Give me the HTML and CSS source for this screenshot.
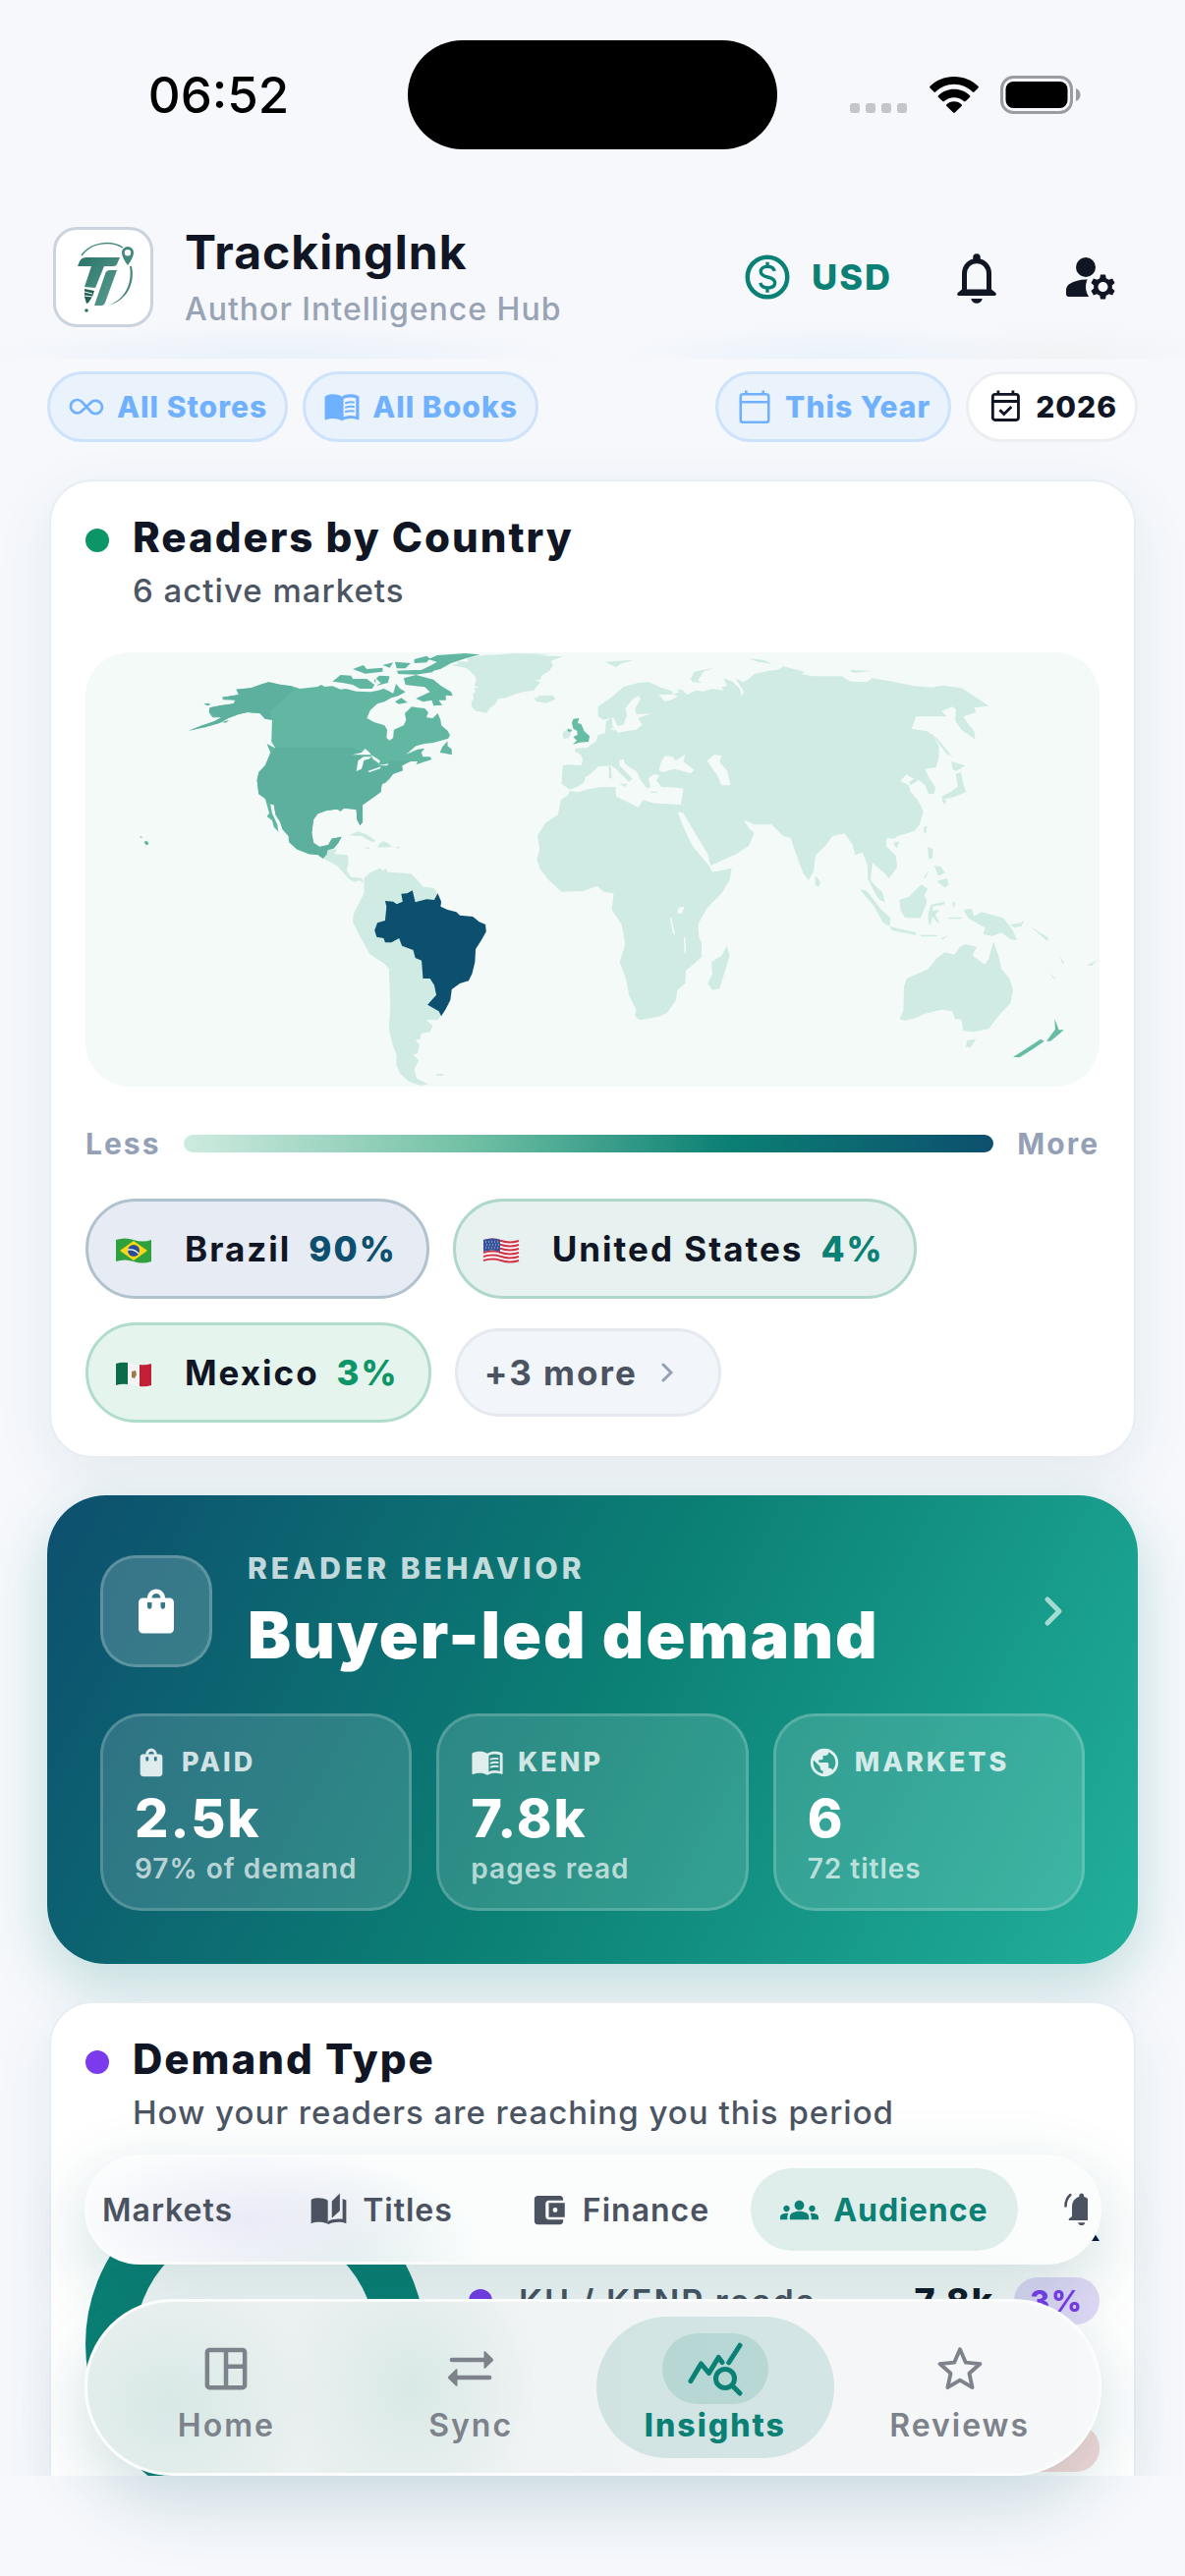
FILE: index.html
```html
<!DOCTYPE html>
<html lang="en">
<head>
<meta charset="utf-8">
<meta name="viewport" content="width=device-width, initial-scale=1">
<title>TrackingInk</title>
<link rel="stylesheet" href="styles.css">
</head>
<body>
<svg class="sprite" aria-hidden="true">
  <symbol id="i-bag" viewBox="0 0 24 24"><path fill="currentColor" d="M18 6h-2c0-2.21-1.79-4-4-4S8 3.79 8 6H6c-1.1 0-2 .9-2 2v12c0 1.1.9 2 2 2h12c1.100 0 2-.9 2-2V8c0-1.100-.9-2-2-2zm-8 4c0 .55-.45 1-1 1s-1-.45-1-1V8h2v2zm2-6c1.100 0 2 .9 2 2h-4c0-1.100.9-2 2-2zm4 6c0 .55-.45 1-1 1s-1-.45-1-1V8h2v2z"/></symbol>
  <symbol id="i-book" viewBox="0 0 24 24"><path fill="currentColor" fill-rule="evenodd" d="M1 5.500C2.500 4.300 4.500 4 6.500 4c2 0 4 .4 5.500 1.500C13.500 4.400 15.500 4 17.500 4c2 0 4 .3 5.500 1.500V20c0 .4-.4.6-.8.4-1.400-.7-3-.9-4.700-.9-1.900 0-3.900.4-5.500 1.500-1.600-1.100-3.600-1.500-5.500-1.500-1.700 0-3.300.2-4.700.9-.4.2-.8 0-.8-.4zM13 7v11.700c1.300-.7 3-1 4.500-1 1.200 0 2.400.1 3.500.5V6.500c-1.100-.4-2.300-.5-3.500-.5-1.500 0-3.200.3-4.500 1z"/><path fill="none" stroke="currentColor" stroke-width="1.300" stroke-linecap="round" d="M14.500 9.600c1.600-.6 3.300-.7 5-.4M14.500 12.400c1.600-.6 3.300-.7 5-.4M14.500 15.200c1.600-.6 3.300-.7 5-.4"/></symbol>
</svg>

<div class="app">
  <div class="status">
    <span class="status-time">06:52</span>
    <span class="island"></span>
    <span class="status-icons">
      <svg class="ic-dots" viewBox="0 0 58 10"><g fill="#c5c6c9"><rect width="10" height="10" rx="3"/><rect x="16" width="10" height="10" rx="3"/><rect x="32" width="10" height="10" rx="3"/><rect x="48" width="10" height="10" rx="3"/></g></svg>
      <svg class="ic-wifi" viewBox="0 0 50 38"><path d="M25 0C35 0 43.500 3.800 49.500 9.800c.5.5.5 1.200 0 1.700l-4 4c-.5.5-1.200.5-1.700 0C38.800 10.600 32.300 7.700 25 7.700S11.200 10.600 6.200 15.500c-.5.5-1.200.5-1.700 0l-4-4c-.5-.5-.5-1.200 0-1.700C6.500 3.800 15 0 25 0zM25 12.800c6.200 0 11.800 2.400 16 6.400.5.5.5 1.200 0 1.700l-4.300 4.200c-.5.5-1.200.5-1.700 0-2.700-2.400-6.100-3.900-10-3.900s-7.300 1.500-10 3.900c-.5.5-1.200.5-1.700 0L9 20.900c-.5-.5-.5-1.200 0-1.700 4.200-4 9.800-6.400 16-6.400zM25 25.300c3 0 5.600 1.100 7.600 2.900.5.5.5 1.200 0 1.700l-6.700 6.700c-.5.5-1.300.5-1.800 0l-6.700-6.700c-.5-.5-.5-1.200 0-1.700 2-1.800 4.600-2.900 7.600-2.900z"/></svg>
      <svg class="ic-batt" viewBox="0 0 82 39"><rect x="1.500" y="1.500" width="71" height="36" rx="12" fill="none" stroke="#9b9ca1" stroke-width="3"/><rect x="5.500" y="6" width="63" height="27" rx="8"/><path d="M77 13c3 1 4.500 3.600 4.500 6.500S80 25 77 26z" fill="#9b9ca1"/></svg>
    </span>
  </div>

  <header class="appbar">
    <span class="logo">
      <svg viewBox="0 0 96 96" role="img" aria-label="TrackingInk logo">
        <defs><linearGradient id="lg" x1="0" y1="0" x2="1" y2="1"><stop offset="0" stop-color="#2c7468"/><stop offset="1" stop-color="#5a9e93"/></linearGradient></defs>
        <path d="M26 26C35 13 55 10 68 18" fill="none" stroke="#44897d" stroke-width="1.400"/>
        <path d="M77 37c4 18-6 36-24 40 17-6 25-22 22-40z" fill="#44897d"/>
        <path fill="url(#lg)" d="M31 28h34l-3 7q-1 2-3 2H49l-9 22-11-1 7-21H22l2-5q2-4 7-4zM55 41h7L50 74q-1 3-4 3h-7l11-32q1-4 5-4z"/>
        <path fill="#235f55" d="M29 60l10 2-2 6-4 6-2 1-2-7z"/><path d="M29 63l8 2M29 67l8 1" stroke="#fff"/><circle cx="31" cy="82" r="1.800" fill="#2c7468"/>
        <path fill="#44897d" fill-rule="evenodd" d="M73 17a6 6 0 0 1 6 6c0 4-3 9-6 13-3-4-6-9-6-13a6 6 0 0 1 6-6zm0 3a3.200 3.200 0 1 0 0 6.400 3.200 3.200 0 0 0 0-6.400z"/>
      </svg>
    </span>
    <div class="brand">
      <h1>TrackingInk</h1>
      <p>Author Intelligence Hub</p>
    </div>
    <button class="currency" type="button">
      <svg viewBox="0 0 24 24" fill="none" stroke="currentColor"><circle cx="12" cy="12" r="9" stroke-width="2"/><path stroke-width="1.500" d="M15.200 9.300c-.3-1.300-1.400-2.100-3.100-2.100-1.800 0-3.100.9-3.100 2.300 0 1.500 1.200 2 3.100 2.500 2.100.5 3.300 1.100 3.300 2.600s-1.300 2.300-3.200 2.300c-1.800 0-3.100-.8-3.400-2.300M12 5.200v2M12 17v2"/></svg>
      USD
    </button>
    <button class="icon-btn" type="button" aria-label="Notifications">
      <svg viewBox="0 0 24 24"><path fill="none" stroke="currentColor" stroke-width="2" d="M7 18.500v-7.800c0-3 2-5.200 5-5.200s5 2.200 5 5.200v7.800"/><path fill="currentColor" d="M10.500 5.500V4a1.500 1.500 0 0 1 3 0v1.500zM6 17h12l1.700 1.400c.5.500.2 1.200-.5 1.200H4.800c-.7 0-1-.7-.5-1.200zM9.700 20.800h4.600c-.2 1.200-1.200 1.900-2.300 1.900s-2.100-.7-2.300-1.900z"/></svg>
    </button>
    <button class="icon-btn" type="button" aria-label="Account settings">
      <svg viewBox="0 0 24 24" fill="currentColor"><circle cx="10" cy="8" r="4"/><path d="M10.670 13.020C10.450 13.010 10.230 13 10 13c-2.420 0-4.680.67-6.610 1.820C2.510 15.340 2 16.320 2 17.350V19c0 .6.400 1 1 1h8.260c-.79-1.130-1.260-2.510-1.260-4 0-1.070.25-2.070.67-2.980z"/><path fill-rule="evenodd" d="M20.750 16c0-.22-.03-.42-.06-.63l1.140-1.010-1-1.730-1.450.49c-.32-.27-.68-.48-1.080-.63L18 11h-2l-.3 1.490c-.4.15-.76.36-1.080.63l-1.450-.49-1 1.730 1.140 1.010c-.03.21-.06.41-.06.63s.03.42.06.63l-1.140 1.010 1 1.730 1.450-.49c.32.27.68.48 1.080.63L16 21h2l.3-1.490c.4-.15.76-.36 1.080-.63l1.450.49 1-1.730-1.140-1.010c.03-.21.06-.41.06-.63zM17 18c-1.100 0-2-.9-2-2s.9-2 2-2 2 .9 2 2-.9 2-2 2z"/></svg>
    </button>
  </header>

  <div class="viewport">
    <main class="scroll">
      <div class="filters">
        <button class="chip" type="button"><svg viewBox="0 0 24 24"><path fill="none" stroke="currentColor" stroke-width="1.700" stroke-linecap="round" d="M11 13l-2.500 2.200A4.200 4.200 0 1 1 9.300 9.100L14.700 15A4.200 4.200 0 1 0 15.500 8.800L13 11"/></svg>All Stores</button>
        <button class="chip" type="button"><svg><use href="#i-book"/></svg>All Books</button>
        <span class="spacer"></span>
        <button class="chip" type="button"><svg viewBox="0 0 24 24" fill="none" stroke="currentColor" stroke-width="1.600"><rect x="3" y="4" width="18" height="18" rx="1.500"/><path d="M3 9h18M6.500 1.500V4M17.500 1.500V4"/></svg>This Year</button>
        <button class="chip chip-plain" type="button"><svg viewBox="0 0 24 24" fill="none" stroke="currentColor" stroke-width="1.800"><rect x="4" y="4" width="16.500" height="16.500" rx="1.500"/><path d="M4 8.500h16.500M7.500 1.500V4M17 1.500V4M8.500 14l2.700 2.700L16 12"/></svg>2026</button>
      </div>

      <section class="card">
        <div class="card-head">
          <span class="dot dot-green"></span>
          <div><h2>Readers by Country</h2><p>6 active markets</p></div>
        </div>
        <svg class="map" viewBox="0 0 1032 442" role="img" aria-label="World map of readers">
          <rect width="1032" height="442" fill="#f3faf8"/>
          <g transform="translate(-6.500 -13) scale(.35714 .33333)">
            <g fill="#cfebe3">
              <path d="M1060 78L1080 74 1075 66 1110 68 1105 58 1150 48 1200 46 1240 42 1340 44 1310 48 1378 52 1345 65 1350 80 1340 95 1318 110 1315 122 1298 124 1315 130 1295 155 1265 160 1240 168 1215 178 1195 180 1185 198 1172 208 1160 224 1130 218 1118 205 1118 190 1125 180 1122 165 1130 160 1125 148 1139 146 1126 140 1132 125 1128 110 1105 88zM1295 175L1305 180 1308 172 1325 172 1350 170 1358 182 1330 194 1302 188zM695 668L706 655 708 642 735 640 728 655 765 658 768 680 762 705 775 725 805 728 812 745 800 735 785 740 770 732 755 715 735 690zM768 598L795 586 820 595 845 615 835 618 805 600zM858 622L868 616 880 622 892 633 850 635zM815 635l12-1 0 4-12 0zM904 633h10v4h-10z"/>
              <path d="M812 728L830 712 860 697 862 706 875 700 880 710 905 712 945 715 965 735 980 755 1010 758 1022 775 1000 900 1040 1080 1030 1150 1022 1162 988 1160 1008 1180 1000 1198 975 1202 972 1220 958 1222 970 1238 965 1262 952 1268 968 1285 955 1312 962 1340 995 1358 975 1362 940 1350 915 1325 903 1295 905 1270 893 1235 883 1190 887 1120 883 1005 870 990 828 960 800 905 780 862 782 838 800 800 812 775zM1018 1326h20v5h-20z"/>
            </g>
            <path fill="#62b7a2" d="M370 222L378 215 372 208 405 200 440 196 445 185 410 184 408 176 440 172 455 168 448 152 490 148 520 136 540 130 575 138 605 142 630 150 660 146 680 144 690 138 700 144 722 142 745 152 760 150 790 158 830 160 850 156 868 150 885 158 895 165 903 135 915 150 930 160 910 172 890 178 870 190 850 196 830 215 820 240 840 252 870 262 878 275 876 300 885 308 895 300 897 275 925 262 932 245 928 225 948 205 965 208 985 210 995 222 990 238 1008 240 1022 225 1030 245 1032 262 1050 278 1057 292 1052 302 1010 315 985 318 960 325 932 350 965 335 985 332 975 345 980 358 1000 358 1005 366 960 382 965 372 945 372 920 385 922 400 895 410 885 425 870 440 868 430 862 445 860 465 835 485 808 505 803 530 808 558 800 567 792 550 790 520 780 515 755 515 745 525 735 518 705 522 680 532 668 550 663 590 668 620 685 633 710 627 720 608 748 602 738 622 725 638 708 642 706 655 695 668 680 657 655 655 620 640 598 618 597 600 580 580 572 555 560 535 555 505 545 502 550 530 565 565 568 587 555 572 550 552 535 540 542 530 530 485 512 472 507 430 512 405 530 385 545 345 535 318 560 332 548 312 550 245 530 242 515 225 480 222 455 228 425 240 400 255 360 268 312 278 350 262 385 250 405 238 380 238zM1028 345L1035 328 1050 310 1050 325 1062 335 1062 352 1045 348zM722 128L745 108 775 110 780 120 820 120 842 138 835 150 800 150 780 138 750 132zM780 90l30-12 10 12 45-4 0 12-50 6zM840 125l15-15 30 2-5 20-30 8zM865 78l30-8-10 16zM900 68l45 4-15 16-25 0zM905 95l95-4 10 8-50 8-50-2zM955 60l35-10 10 8-10 12-35 2zM925 118L960 108 1010 122 1030 140 1060 160 1065 172 1045 170 1045 185 1025 185 1035 200 1010 202 1005 185 980 190 960 180 1000 160 985 145 960 142 930 138zM970 95L1000 80 1020 68 995 60 1020 48 1100 42 1142 46 1100 58 1060 72 1030 90 1000 98zM900 190l18-12 18 14-25 5zM355 196l15-2 5 5-10 3zM405 252l22-6-8 8z"/>
            <path fill="#5db09d" d="M575 138L605 142 610 155 545 220 550 245 530 242 515 225 480 222 455 228 425 240 400 255 312 278 385 250 405 238 370 222 372 208 440 196 445 185 408 176 455 168 448 152 490 148 540 130zM560 330H780L800 340 860 390 890 370 945 370 920 385 922 400 895 410 862 445 860 465 808 505 808 558 800 567 792 550 790 520 755 515 705 522 680 532 668 550 663 590 668 620 685 633 710 627 720 608 748 602 738 622 725 638 708 642 706 655 695 668 680 657 655 655 620 640 598 618 597 600 580 580 572 555 560 535 555 505 545 502 530 485 512 472 507 430 512 405 530 385 550 345zM185 618l8-4 6 10-8 4zM172 600l8 3-2 3z"/>
            <path fill="#f3faf8" d="M778 352L805 345 815 333 828 345 832 352 800 352zM790 402L795 370 810 358 835 357 825 365 812 368 805 395zM832 352L858 370 855 378 838 365zM822 402L860 388 858 394 828 405zM852 384L882 379 878 385zM525 285h10l-4 14-6-2zM845 118l15 15-15 8z"/>
            <path fill="#0d4f6e" d="M872 798L895 800 905 808 922 800 918 776 935 775 950 766 958 802 990 793 1012 795 1022 775 1032 800 1030 815 1050 825 1075 832 1085 842 1122 846 1140 862 1158 870 1160 892 1145 920 1130 945 1128 985 1120 1020 1110 1042 1085 1050 1062 1068 1058 1100 1045 1128 1032 1150 1025 1135 993 1115 1018 1085 1012 1055 1000 1035 980 1035 976 980 958 972 952 948 920 935 912 912 890 925 872 925 868 912 848 908 842 888 850 865 872 858 876 815z"/>
          </g>
          <g transform="translate(473.500 -13) scale(.3699 .33333)">
            <g fill="#cfebe3">
              <path d="M33 385L45 382 85 384 88 365 82 350 66 342 68 332 100 330 125 310 130 292 150 285 152 250 168 238 170 262 178 275 185 285 205 280 235 275 252 260 240 240 262 232 278 226 235 228 232 210 248 180 240 172 225 182 205 210 210 230 200 260 184 264 172 238 145 245 130 235 130 205 165 178 200 145 240 132 270 130 300 145 335 158 335 168 297 168 315 190 340 180 350 172 335 168 355 160 345 155 360 152 375 168 400 155 420 158 445 150 475 155 470 145 485 142 475 118 500 128 520 150 525 172 532 160 515 130 508 118 530 130 545 120 560 105 600 95 625 92 640 82 698 98 690 105 720 112 800 112 825 128 870 130 885 118 940 128 1000 142 1050 146 1075 140 1130 148 1175 180 1205 203 1165 208 1170 222 1135 235 1150 260 1165 280 1168 305 1130 275 1113 248 1115 212 1105 205 1075 218 1090 235 1060 235 1005 235 993 272 1035 280 1050 290 1068 325 1068 360 1060 390 1030 395 1040 420 1058 450 1055 470 1040 472 1030 445 1012 428 990 445 985 435 1000 425 978 412 962 432 985 445 990 465 1010 490 1025 525 1015 565 1000 585 955 600 945 608 925 605 922 630 950 660 953 695 930 730 920 715 885 682 880 735 900 760 912 770 920 802 905 795 890 770 872 730 872 690 858 650 838 658 830 625 808 592 775 600 755 630 728 660 724 705 710 735 695 715 675 655 660 605 640 600 608 565 560 565 535 552 520 575 497 575 480 545 465 515 478 520 500 545 530 550 545 575 560 590 545 630 510 655 440 690 432 655 402 600 365 530 340 520 358 505 365 455 345 452 305 450 290 430 300 415 285 410 268 425 275 450 265 455 245 425 238 405 205 380 200 365 188 368 190 385 225 425 215 435 180 395 165 385 130 388 110 410 95 420 92 435 72 450 52 458 30 440z"/>
              <path d="M52 462L75 466 110 455 145 450 178 450 180 480 210 495 240 512 255 490 285 500 320 502 362 505 350 530 372 590 390 630 435 690 445 710 498 698 492 735 470 775 430 820 405 870 408 910 415 925 415 970 372 1010 370 1050 348 1070 345 1100 320 1140 295 1152 245 1162 232 1150 235 1130 215 1085 208 1040 190 985 205 930 195 870 168 825 173 775 145 770 128 752 90 768 30 770 -5 735 -30 700 -38 670 -30 640 -37 600 -15 560 20 535 28 490 48 475zM485 935L492 965 465 1065 445 1070 432 1050 445 1020 442 985 470 965zM728 720L742 740 738 755 728 750zM850 762L870 768 910 825 935 850 932 875 915 865 890 815zM932 875L965 885 1005 895 1003 902 940 888zM960 795L985 785 1020 748 1037 762 1028 780 1035 800 1018 850 975 850 962 825zM1045 810L1085 800 1082 810 1052 815 1050 828 1070 825 1058 840 1070 865 1062 862 1050 845 1045 872 1040 868 1038 840zM1135 825L1158 822 1165 845 1185 832 1245 850 1270 885 1283 918 1265 915 1240 895 1215 905 1190 900 1195 880 1150 852z"/>
              <path d="M972 1060L980 1035 1040 1005 1060 975 1085 955 1110 962 1125 940 1140 930 1172 938 1160 965 1195 992 1205 975 1218 922 1232 965 1240 1005 1262 1035 1272 1070 1265 1110 1235 1145 1205 1188 1165 1198 1135 1195 1130 1160 1112 1158 1105 1135 1075 1130 1030 1142 1005 1155 975 1163 960 1158 970 1135zM1145 1224L1170 1220 1155 1245 1142 1245zM1102 372L1120 378 1140 385 1115 402 1105 395zM1128 405L1135 440 1143 465 1110 480 1080 488 1075 480 1100 465 1120 450 1115 410zM1075 488L1088 490 1085 505zM1048 288L1070 310 1102 355 1090 350zM1028 570h7l-3 25-6-10zM945 617l14 0-6 18-8-6zM1037 633L1052 640 1050 668 1040 670zM1055 690l18 4 12 18-18 10zM1062 738L1090 728 1095 748 1085 758zM1025 728l15-22-8 20zM385 120L395 98 450 86 420 98 405 125 418 132 390 130zM150 68L228 62 190 75 180 85zM545 58l40 4 25 12-40-6zM822 92l60 4-50 6zM1265 870L1295 865 1303 855 1295 875 1275 880zM1370 1018l20 18-6 0zM1475 995l28-16-14 16zM1105 800l8 4-4 18zM1095 848h35v5h-35zM1018 902h45v5h-45zM1072 914l25-14-18 16zM160 385l6 4 2 36-8-2zM188 440l22 0-4 10zM275 464h18v4h-18zM1400 965l12 22-4 4zM1320 876l50 36-4 8zM33 285L48 270 56 285 50 300 35 304z"/>
            </g>
            <path fill="#f3faf8" d="M297 400L305 370 315 355 335 358 345 370 370 350 365 372 395 398 385 408 340 395 308 405zM430 370L450 352 470 355 465 375 485 400 495 445 470 445 458 415zM348 835L352 818 368 815 360 838zM328 848l4 2 10 52-6-6zM366 910l4 0 2 48-4-2zM162 270h14l-2 8z"/>
            <path fill="#67bda3" d="M62 242L78 240 74 255 84 258 92 280 107 295 104 312 80 314 60 320 72 308 62 298 74 290 72 278 62 272 58 255zM47 272l12 4-4 6-8-2zM1386 1158L1394 1180 1398 1192 1412 1192 1395 1208 1375 1226 1364 1226 1388 1190zM1348 1220L1358 1226 1330 1248 1290 1276 1272 1274 1290 1262z"/>
          </g>
        </svg>
        <div class="scale"><span>Less</span><span class="scale-bar"></span><span>More</span></div>
        <div class="pills">
          <button class="pill pill-navy" type="button"><svg viewBox="0 0 38 28"><path fill="#2fa23e" d="M1 3q9-3 18 0t18 0v22q-9 3-18 0t-18 0z"/><path fill="#f9d616" d="M19 4l14 10-14 10L5 14z"/><circle cx="19" cy="14" r="6" fill="#2a4d9b"/><path d="M13 13q7-1 11 4" stroke="#fff" stroke-width="1.300" fill="none"/></svg>Brazil <b>90%</b></button>
          <button class="pill pill-teal" type="button"><svg viewBox="0 0 38 28"><path fill="#fff" d="M1 3q9-3 18 0t18 0v22q-9 3-18 0t-18 0z"/><path fill="none" stroke="#cf3346" stroke-width="2" d="M1 4q9-3 18 0t18 0M1 8q9-3 18 0t18 0M1 12q9-3 18 0t18 0M1 16q9-3 18 0t18 0M1 20q9-3 18 0t18 0M1 24q9-3 18 0t18 0"/><path fill="#36539b" d="M1 3q9-3 17 0v12q-8-3-17 0z"/><path stroke="#c9d2e8" stroke-dasharray="1 2" d="M3 5h14M4 8h14M3 11h14"/></svg>United States <b>4%</b></button>
          <button class="pill pill-green" type="button"><svg viewBox="0 0 38 28"><path fill="#f4f4f4" d="M1 3q9-3 18 0t18 0v22q-9 3-18 0t-18 0z"/><path fill="#0d6b4b" d="M1 3q6-2 12-1v22q-6-1-12 1z"/><path fill="#c22038" d="M25 4q6 1 12-1v22q-6 2-12 1z"/><path fill="#9a7b4a" d="M17 11l4-1 1 4-2 4-3-1z"/></svg>Mexico <b>3%</b></button>
          <button class="pill pill-more" type="button">+3 more <svg class="chev" viewBox="0 0 12 22" fill="none" stroke="currentColor" stroke-width="3" stroke-linecap="round"><path d="M2 3l8 8-8 8"/></svg></button>
        </div>
      </section>

      <section class="hero">
        <div class="hero-head">
          <span class="hero-icon"><svg><use href="#i-bag"/></svg></span>
          <div class="hero-text"><p>READER BEHAVIOR</p><h2>Buyer-led demand</h2></div>
          <svg class="hero-chev" viewBox="0 0 20 32" fill="none" stroke="currentColor" stroke-width="5" stroke-linecap="round" stroke-linejoin="round"><path d="M4 4l12 12L4 28"/></svg>
        </div>
        <div class="tiles">
          <div class="tile"><h3><svg><use href="#i-bag"/></svg>PAID</h3><strong>2.5k</strong><span>97% of demand</span></div>
          <div class="tile"><h3><svg><use href="#i-book"/></svg>KENP</h3><strong>7.8k</strong><span>pages read</span></div>
          <div class="tile"><h3><svg viewBox="0 0 24 24" fill="currentColor"><path d="M12 2C6.480 2 2 6.480 2 12s4.480 10 10 10 10-4.480 10-10S17.520 2 12 2zm-1 17.930c-3.950-.49-7-3.850-7-7.930 0-.62.08-1.210.21-1.790L9 15v1c0 1.100.9 2 2 2v1.930zm6.900-2.540c-.26-.81-1-1.390-1.900-1.390h-1v-3c0-.55-.45-1-1-1H8v-2h2c.55 0 1-.45 1-1V7h2c1.100 0 2-.9 2-2v-.41c2.930 1.190 5 4.060 5 7.410 0 2.080-.8 3.970-2.100 5.390z"/></svg>MARKETS</h3><strong>6</strong><span>72 titles</span></div>
        </div>
      </section>

      <section class="card">
        <div class="card-head">
          <span class="dot dot-violet"></span>
          <div><h2>Demand Type</h2><p>How your readers are reaching you this period</p></div>
        </div>
        <div class="demand">
          <svg class="donut" viewBox="0 0 346 346"><circle cx="173" cy="173" r="148" fill="none" stroke="#0b8074" stroke-width="50"/></svg>
          <div class="legend">
            <p class="legend-total">2.5k</p>
            <p class="legend-row"><span class="dot dot-violet"></span><span class="legend-name">KU / KENP reads</span><strong>7.8k</strong><span class="badge">3%</span></p>
            <p class="legend-row legend-last"><span class="badge badge-red">–</span></p>
          </div>
        </div>
      </section>
    </main>

    <div class="dock">
      <div class="tabs"><div class="tabs-clip">
        <button class="tab" type="button">Markets</button>
        <button class="tab" type="button"><svg viewBox="0 0 24 24" fill="currentColor"><path d="M1 5.500C2.500 4.700 4 4.500 5.800 4.500c2 0 4 .4 5.700 1.500v14.800c-1.700-1-3.700-1.300-5.700-1.300-1.700 0-3.300.2-4.800.9z"/><path d="M19 1.500v11l-5 4.500V6.500z"/><path d="M20.700 5c.8.200 1.600.4 2.300.8V20.400c-1.500-.7-3.100-.9-4.800-.9-2.300 0-4.400.4-6.700 1.500V19c2-1 4.400-1.500 6.700-1.500.9 0 1.700.1 2.500.2z"/></svg>Titles</button>
        <button class="tab" type="button"><svg viewBox="0 0 24 24" fill="currentColor"><path d="M21 18v1c0 1.100-.9 2-2 2H5c-1.100 0-2-.9-2-2V5c0-1.100.9-2 2-2h14c1.100 0 2 .9 2 2v1h-9c-1.100 0-2 .9-2 2v8c0 1.100.9 2 2 2h9z"/><path fill-rule="evenodd" d="M12 7.500h10v9H12zm4 6a1.500 1.500 0 1 0 0-3 1.500 1.500 0 0 0 0 3z"/></svg>Finance</button>
        <button class="tab tab-active" type="button"><svg viewBox="0 0 24 24" fill="currentColor"><path d="M12 12.750c1.630 0 3.070.39 4.240.9 1.080.48 1.760 1.560 1.760 2.730V18H6v-1.610c0-1.180.68-2.260 1.760-2.730 1.170-.52 2.610-.91 4.240-.91zM4 13c1.100 0 2-.9 2-2s-.9-2-2-2-2 .9-2 2 .9 2 2 2zm1.130 1.100C4.760 14.040 4.390 14 4 14c-.99 0-1.930.21-2.780.58C.48 14.900 0 15.620 0 16.430V18h4.500v-1.610c0-.83.23-1.610.63-2.290zM20 13c1.100 0 2-.9 2-2s-.9-2-2-2-2 .9-2 2 .9 2 2 2zm4 3.430c0-.81-.48-1.530-1.220-1.850-.85-.37-1.790-.58-2.780-.58-.39 0-.76.04-1.130.1.4.68.63 1.460.63 2.290V18H24v-1.570zM12 6c1.660 0 3 1.340 3 3s-1.340 3-3 3-3-1.340-3-3 1.340-3 3-3z"/></svg>Audience</button>
        <button class="tab tab-alerts" type="button" aria-label="Alerts"><svg viewBox="0 0 24 24"><path fill="currentColor" d="M14 1.500c.9 0 1.500.6 1.500 1.500v.7c2.900.7 4.500 3.300 4.500 6.300v6l2 1.500v.9H6v-.9L8 16v-6c0-3 1.600-5.600 4.500-6.300V3c0-.9.6-1.500 1.500-1.500zM11.800 19.800h4.400c-.2 1.300-1.200 1.800-2.200 1.800s-2-.5-2.200-1.800z"/><path fill="none" stroke="currentColor" stroke-width="1.600" stroke-linecap="round" d="M4 9.500c0-2.800 1-5.200 3-7"/></svg></button>
      </div></div>
      <nav class="nav">
        <a class="nav-item" href="#home"><span class="nav-icon"><svg viewBox="0 0 24 24" fill="none" stroke="currentColor" stroke-width="2"><rect x="3.500" y="3.500" width="17" height="17" rx="1"/><path d="M12 3.500v17M12 11h8.500"/></svg></span>Home</a>
        <a class="nav-item" href="#sync"><span class="nav-icon"><svg viewBox="0 0 24 24"><path fill="none" stroke="currentColor" stroke-width="2" stroke-linecap="round" d="M3.500 8H19M5 16h15.500"/><path fill="currentColor" d="M18 4.500c0-.4.4-.5.700-.3l3.400 3.400c.2.200.2.600 0 .8l-3.400 3.400c-.3.200-.7.100-.7-.3zM6 12.500c0-.4-.4-.5-.7-.3l-3.400 3.400c-.2.200-.2.600 0 .8l3.400 3.400c.3.200.7.100.7-.3z"/></svg></span>Sync</a>
        <a class="nav-item nav-active" href="#insights"><span class="nav-icon"><svg viewBox="0 0 24 24" fill="none" stroke="currentColor" stroke-width="2" stroke-linecap="round" stroke-linejoin="round"><path d="M2 17l4.200-7 3.200 3.800 3.900-6.400 1.500 2M22 2.500l-4.500 7M22 22l-3-3"/><circle cx="16" cy="16" r="3.800"/></svg></span>Insights</a>
        <a class="nav-item" href="#reviews"><span class="nav-icon"><svg viewBox="0 0 24 24" fill="none" stroke="currentColor" stroke-width="1.700" stroke-linejoin="round"><path d="M12 3.200l2.600 6 6.500.6-4.900 4.300 1.400 6.400L12 17.200l-5.600 3.300 1.400-6.400-4.900-4.300 6.500-.6z"/></svg></span>Reviews</a>
      </nav>
    </div>
  </div>
</div>
</body>
</html>
```
FILE: styles.css
```css
* { box-sizing: border-box; }

body {
  margin: 0;
  background: #f6f8fc;
  color: #111625;
  font-family: Inter, "Liberation Sans", sans-serif;
}

h1, h2, h3, p { margin: 0; }

button {
  margin: 0;
  padding: 0;
  border: 0;
  background: none;
  color: inherit;
  font: inherit;
  white-space: nowrap;
}

svg { display: block; flex: none; }
.sprite { position: absolute; width: 0; height: 0; }

.app {
  display: flex;
  flex-direction: column;
  height: 100vh;
  padding-bottom: 102px;
}

/* Device status bar */
.status {
  display: grid;
  grid-template-columns: 1fr 376px 1fr;
  align-items: center;
  flex: none;
  height: 193px;
}
.status-time {
  padding-left: 30px;
  color: #000;
  font-size: 51px;
  font-weight: 500;
  text-align: center;
}
.island { height: 111px; border-radius: 56px; background: #000; }
.status-icons { display: flex; align-items: center; justify-content: flex-end; padding-right: 106px; }
.ic-dots { width: 58px; height: 10px; margin: 26px 23px 0 0; }
.ic-wifi { width: 50px; height: 38px; margin-right: 22px; }
.ic-batt { width: 82px; height: 39px; }

/* App bar */
.appbar {
  display: flex;
  align-items: center;
  flex: none;
  padding: 36px 66px 30px 54px;
  background:
    radial-gradient(300px 36px at 280px 100%, #e9f1fa, transparent),
    radial-gradient(220px 36px at 850px 100%, #eaf2fb, transparent),
    radial-gradient(160px 36px at 1080px 100%, #f1f2f4, transparent);
}
.logo { width: 102px; height: 102px; border: 3px solid #cbd3df; border-radius: 24px; background: #fff; overflow: hidden; }
.logo svg { width: 96px; height: 96px; }
.brand { flex: 1; padding-left: 32px; }
.brand h1 { font-size: 48px; font-weight: 700; line-height: 56px; letter-spacing: 1px; }
.brand p { margin-top: 10px; color: #98a3b5; font-size: 32px; font-weight: 500; line-height: 40px; letter-spacing: 1px; }
.currency { display: flex; align-items: center; gap: 18px; color: #0b8074; font-size: 36px; font-weight: 800; letter-spacing: 2px; }
.currency svg { width: 54px; height: 54px; }
.icon-btn { margin-left: 56px; }
.icon-btn svg { width: 60px; height: 60px; }

/* Scrolling content */
.viewport { position: relative; flex: 1; min-height: 0; }
.scroll {
  display: flex;
  flex-direction: column;
  gap: 38px;
  height: 100%;
  padding: 13px 48px 0;
  overflow: hidden;
}
.scroll > * { flex: none; }

.filters { display: flex; gap: 15px; }
.spacer { flex: 1; }
.chip {
  display: flex;
  align-items: center;
  gap: 12px;
  height: 72px;
  padding: 0 18px;
  border: 3px solid #cde2fb;
  border-radius: 36px;
  background: #eaf2fb;
  color: #70b1ff;
  font-size: 30px;
  font-weight: 800;
  letter-spacing: 1px;
}
.chip svg { width: 38px; height: 38px; }
.chip-plain { border-color: #eceef2; background: #fff; color: #111625; }

/* Cards */
.card {
  margin: 0 2px;
  padding: 30px 35px 34px;
  border: 2px solid #e8edf2;
  border-radius: 44px;
  background: #fff;
  box-shadow: 0 18px 60px rgba(30, 90, 100, .08);
}
.card-head { display: flex; gap: 24px; }
.card-head h2 { font-size: 42px; font-weight: 800; line-height: 54px; letter-spacing: 2px; }
.card-head p { margin-top: 5px; color: #4b5563; font-size: 33px; font-weight: 500; line-height: 44px; letter-spacing: 1px; }
.dot { flex: none; width: 24px; height: 24px; border-radius: 50%; }
.card-head .dot { margin-top: 18px; }
.dot-green { background: #0c9668; }
.dot-violet { background: #7c3aed; }

.map { width: 100%; height: auto; margin-top: 41px; border-radius: 45px; }

.scale { display: flex; align-items: center; gap: 24px; margin-top: 40px; color: #94a0b5; font-size: 30px; font-weight: 700; line-height: 36px; letter-spacing: 2px; }
.scale-bar { flex: 1; height: 18px; border-radius: 9px; background: linear-gradient(90deg, #cfebe0, #6fbfa3 36%, #0b8074 67%, #0d4f6e); }

.pills { display: flex; flex-wrap: wrap; align-items: center; gap: 24px; margin-top: 38px; }
.pill {
  display: flex;
  align-items: center;
  gap: 18px;
  height: 102px;
  padding: 0 30px 0 27px;
  border: 3px solid;
  border-radius: 51px;
  font-size: 35px;
  font-weight: 700;
  letter-spacing: 2px;
}
.pill svg { width: 38px; height: 28px; margin: 4px 15px 0 0; }
.pill b { font-weight: 800; }
.pill-navy { border-color: #b0c2cd; background: #e7ebf3; }
.pill-navy b { color: #0d4f6e; }
.pill-teal { border-color: #b0d7cc; background: #e7f1ef; }
.pill-teal b { color: #0b8074; }
.pill-green { border-color: #b0dccb; background: #e6f4ee; }
.pill-green b { color: #0c9668; }
.pill-more { height: 90px; border-color: #e6eaf0; background: #f2f6fb; color: #4b5260; }
.pill .chev { width: 12px; height: 22px; margin: 0 16px 0 6px; color: #94a0b5; }

/* Reader behavior */
.hero {
  padding: 54px;
  border-radius: 60px;
  background: linear-gradient(118deg, #0d4f6e, #0b8074 50%, #21b09b);
  box-shadow: 0 20px 60px rgba(11, 128, 116, .24);
  color: #fff;
}
.hero-head { display: flex; align-items: center; }
.hero-icon {
  display: grid;
  place-items: center;
  width: 114px;
  height: 114px;
  border: 3px solid rgba(255, 255, 255, .2);
  border-radius: 36px;
  background: rgba(255, 255, 255, .18);
}
.hero-icon svg { width: 54px; height: 54px; }
.hero-text { flex: 1; padding-left: 36px; }
.hero-text p { color: rgba(255, 255, 255, .77); font-size: 30px; font-weight: 800; line-height: 40px; letter-spacing: 4px; }
.hero-text h2 { margin-top: 8px; font-size: 66px; font-weight: 900; line-height: 80px; letter-spacing: 2px; }
.hero-chev { width: 20px; height: 32px; margin-right: 22px; color: rgba(255, 255, 255, .62); }
.tiles { display: grid; grid-template-columns: repeat(3, 1fr); gap: 25px; margin-top: 40px; }
.tile {
  display: flex;
  flex-direction: column;
  padding: 29px 32px 22px;
  border: 3px solid rgba(255, 255, 255, .18);
  border-radius: 42px;
  background: rgba(255, 255, 255, .14);
}
.tile h3 { display: flex; align-items: center; gap: 14px; color: rgba(255, 255, 255, .78); font-size: 27px; font-weight: 800; line-height: 36px; letter-spacing: 3px; }
.tile h3 svg { width: 34px; height: 36px; color: rgba(255, 255, 255, .85); }
.tile strong { margin-top: 9px; font-size: 54px; font-weight: 800; line-height: 60px; letter-spacing: 2px; }
.tile span { margin-top: 3px; color: rgba(255, 255, 255, .68); font-size: 28px; font-weight: 600; line-height: 36px; letter-spacing: 1px; }

/* Demand type */
.demand { display: flex; gap: 44px; margin-top: 41px; }
.donut { width: 346px; height: 346px; }
.legend { flex: 1; }
.legend-total { height: 105px; padding-top: 30px; font-size: 40px; font-weight: 800; line-height: 48px; text-align: right; }
.legend-row { display: flex; align-items: center; height: 48px; font-size: 36px; letter-spacing: 2px; }
.legend-name { flex: 1; padding-left: 27px; color: #4b5260; font-size: 34px; font-weight: 600; }
.legend-row strong { font-weight: 800; }
.badge { min-width: 87px; margin-left: 20px; border-radius: 24px; background: #e3dbf8; color: #7c3aed; font-size: 30px; font-weight: 800; line-height: 48px; text-align: center; }
.badge-red { background: #f6d9d9; color: #c62828; }
.legend-last { justify-content: flex-end; margin-top: 102px; }

/* Floating tabs and navigation */
.dock { position: absolute; right: 85px; bottom: 0; left: 86px; }
.tabs, .nav {
  border: 3px solid #fbfdfd;
  box-shadow: 0 24px 72px rgba(11, 90, 95, .2);
}
.tabs {
  height: 112px;
  margin-bottom: 35px;
  padding: 9px 11px 9px 15px;
  border-radius: 56px;
  background:
    radial-gradient(190px 80px at 16% 60%, #ebebf7, transparent),
    radial-gradient(150px 90px at 25% 90%, #e4f1ef, transparent),
    #fbfdfd;
}
.tabs-clip { display: flex; align-items: center; height: 88px; overflow: hidden; }
.tab { display: flex; flex: none; align-items: center; gap: 15px; height: 84px; padding: 0 39px; border-radius: 42px; color: #4b5260; font-size: 32px; font-weight: 600; letter-spacing: 1px; }
.tab:first-child { padding-left: 0; }
.tab svg { width: 39px; height: 39px; }
.tab-active { margin: 0 3px; padding: 0 30px; background: #dfedeb; color: #0b8074; font-weight: 700; }
.nav {
  display: flex;
  height: 180px;
  padding: 15px 17px;
  border-radius: 90px;
  background:
    radial-gradient(150px 130px at 8% 60%, #d8e9e5, transparent),
    radial-gradient(130px 150px at 32% 50%, #d9e9e6, transparent),
    linear-gradient(90deg, #ebf1f0 20%, #f3f5f6 60%, #f6f8f9);
}
.nav-item {
  display: flex;
  flex: 1;
  flex-direction: column;
  align-items: center;
  gap: 2px;
  height: 144px;
  margin: 0 3px;
  padding-top: 17px;
  border-radius: 72px;
  color: #7d828b;
  font-size: 32px;
  font-weight: 600;
  line-height: 40px;
  letter-spacing: 2px;
  text-decoration: none;
}
.nav-icon { display: grid; place-items: center; width: 108px; height: 72px; border-radius: 36px; }
.nav-icon svg { width: 54px; height: 54px; }
.nav-active { background: rgba(11, 128, 116, .14); color: #0b8074; font-weight: 800; }
.nav-active .nav-icon { background: rgba(11, 128, 116, .13); }
.nav-active .nav-icon svg { width: 60px; height: 60px; }
```
